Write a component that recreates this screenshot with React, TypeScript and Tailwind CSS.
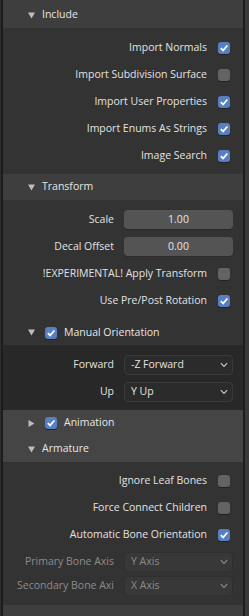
import { ReactNode } from "react";

const font = { fontFamily: '"Open Sans", "Noto Sans", sans-serif' };

const Tri = ({ open }: { open: boolean }) => (
  <svg width="7" height="7" viewBox="0 0 7 7" className="shrink-0">
    {open ? (
      <path d="M0 0.5 H7 L3.5 6.5 Z" fill="#bdbdbd" />
    ) : (
      <path d="M0.5 0 V7 L6.5 3.5 Z" fill="#bdbdbd" />
    )}
  </svg>
);

const Check = ({ on }: { on: boolean }) => (
  <span
    className={`flex h-[12px] w-[12px] shrink-0 items-center justify-center rounded-[3px] shadow-[0_1px_0_#232323] ${
      on ? "bg-[#5680c2]" : "bg-[#636363]"
    }`}
  >
    {on && (
      <svg width="10" height="10" viewBox="0 0 10 10">
        <path d="M1.8 5.2 L4.1 7.4 L8.4 2.5" fill="none" stroke="#ffffff" strokeWidth="1.7" />
      </svg>
    )}
  </span>
);

const Header = ({ title, open, bg, h, check }: { title: string; open: boolean; bg: string; h: string; check?: boolean }) => (
  <div className={`flex items-center pl-[25px] ${bg} ${h}`}>
    <Tri open={open} />
    {check !== undefined ? (
      <>
        <span className="ml-[10px]">
          <Check on={check} />
        </span>
        <span className="ml-[7px] text-[#e6e6e6]">{title}</span>
      </>
    ) : (
      <span className="ml-[7px] text-[#e6e6e6]">{title}</span>
    )}
  </div>
);

const CheckRow = ({ label, on }: { label: string; on: boolean }) => (
  <div className="flex h-[27px] items-center justify-end pr-[13px]">
    <span className="mr-[11px] text-[#e2e2e2]">{label}</span>
    <Check on={on} />
  </div>
);

const FieldRow = ({ label, dim, h, children }: { label: string; dim?: boolean; h: string; children: ReactNode }) => (
  <div className={`flex items-center pr-[10px] ${h}`}>
    <span
      className={`w-[111px] overflow-hidden whitespace-nowrap pl-[9px] text-right ${
        dim ? "text-[#8c8c8c]" : "text-[#e2e2e2]"
      }`}
    >
      {label}
    </span>
    <div className="ml-[10px] flex-1">{children}</div>
  </div>
);

const NumField = ({ value }: { value: string }) => (
  <div className="flex h-[19px] items-center justify-center rounded-[4px] bg-[#545454] text-[#e4e4e4] shadow-[0_1px_0_#2a2a2a]">
    {value}
  </div>
);

const Chevron = ({ color }: { color: string }) => (
  <svg width="8" height="6" viewBox="0 0 8 6">
    <path d="M0.8 1.2 L4 4.4 L7.2 1.2" fill="none" stroke={color} strokeWidth="1.2" />
  </svg>
);

const Select = ({ value, dim }: { value: string; dim?: boolean }) => (
  <div
    className={`flex h-[20px] items-center justify-between rounded-[4px] border pl-[6px] pr-[4px] ${
      dim ? "border-[#2f2f2f] bg-[#383838] text-[#8c8c8c]" : "border-[#3a3a3a] bg-[#2b2b2b] text-[#e2e2e2]"
    }`}
  >
    <span>{value}</span>
    <Chevron color={dim ? "#8a8a8a" : "#c8c8c8"} />
  </div>
);

export default function App() {
  return (
    <div className="flex h-[616px] w-[249px] overflow-hidden bg-[#333333] text-[10.5px]" style={font}>
      <div className="w-[3px] shrink-0 border-l border-[#2e2e2e] bg-[#1c1c1c]" />
      <div className="flex w-[240px] shrink-0 flex-col bg-[#333333]">
        <Header title="Include" open bg="bg-[#3e3e3e]" h="h-[28px] pt-[2px]" />
        <div className="pt-[6px] pb-[5px]">
          <CheckRow label="Import Normals" on />
          <CheckRow label="Import Subdivision Surface" on={false} />
          <CheckRow label="Import User Properties" on />
          <CheckRow label="Import Enums As Strings" on />
          <CheckRow label="Image Search" on />
        </div>

        <Header title="Transform" open bg="bg-[#3e3e3e]" h="h-[26px]" />
        <div className="pt-[6px] pb-[6px]">
          <FieldRow label="Scale" h="h-[27px]">
            <NumField value="1.00" />
          </FieldRow>
          <FieldRow label="Decal Offset" h="h-[27px]">
            <NumField value="0.00" />
          </FieldRow>
          <CheckRow label="!EXPERIMENTAL! Apply Transform" on={false} />
          <CheckRow label="Use Pre/Post Rotation" on />
        </div>

        <Header title="Manual Orientation" open check bg="bg-[#333333]" h="h-[25px]" />
        <div className="bg-[#282828] pt-[6px] pb-[5px]">
          <FieldRow label="Forward" h="h-[27px]">
            <Select value="-Z Forward" />
          </FieldRow>
          <FieldRow label="Up" h="h-[27px]">
            <Select value="Y Up" />
          </FieldRow>
        </div>

        <Header title="Animation" open={false} check bg="bg-[#454545]" h="h-[26px]" />
        <Header title="Armature" open bg="bg-[#454545]" h="h-[26px]" />
        <div className="pt-[5px]">
          <CheckRow label="Ignore Leaf Bones" on={false} />
          <CheckRow label="Force Connect Children" on={false} />
          <CheckRow label="Automatic Bone Orientation" on />
          <div className="pt-[2px]">
            <FieldRow label="Primary Bone Axis" dim h="h-[24px]">
              <Select value="Y Axis" dim />
            </FieldRow>
            <FieldRow label="Secondary Bone Axi" dim h="h-[24px]">
              <Select value="X Axis" dim />
            </FieldRow>
          </div>
        </div>
        <div className="mt-auto h-[11px] bg-[#3e3e3e]" />
      </div>
      <div className="w-[2px] shrink-0 bg-[#1e1e1e]" />
      <div className="flex-1 bg-[#3a3a3a]" />
    </div>
  );
}
